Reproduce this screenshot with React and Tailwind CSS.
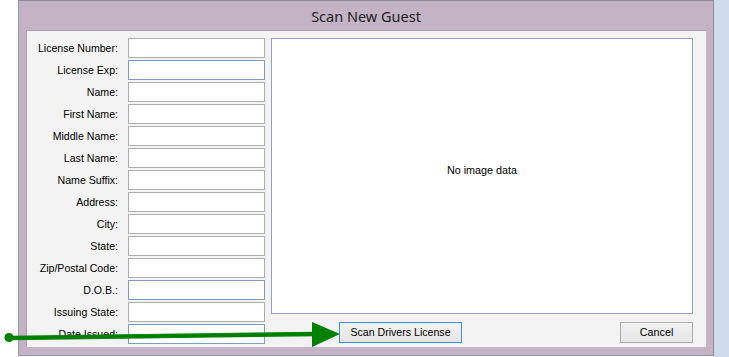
import React from "react";

const fields = [
  ["License Number:", false],
  ["License Exp:", true],
  ["Name:", false],
  ["First Name:", false],
  ["Middle Name:", false],
  ["Last Name:", false],
  ["Name Suffix:", false],
  ["Address:", false],
  ["City:", false],
  ["State:", false],
  ["Zip/Postal Code:", false],
  ["D.O.B.:", true],
  ["Issuing State:", false],
  ["Date Issued:", true],
];

export default function App() {
  return (
    <div className="relative flex w-[729px] h-[357px] bg-white overflow-hidden" style={{ fontFamily: '"Liberation Sans", Arial, sans-serif' }}>
      <div className="w-[18px] shrink-0 bg-white" />
      <div className="w-[696px] h-[356px] shrink-0 flex flex-col bg-[#c3b3c5] border border-[#8e8a9c] border-l-[#8a9ab2] border-b-[#8a9ab2]">
        <div className="h-[29px] flex items-center justify-center text-[15px] text-[#222]" style={{ fontFamily: '"Noto Sans", "Open Sans", sans-serif' }}>
          <span className="relative top-[1px] text-[14.5px]">Scan New Guest</span>
        </div>
        <div className="ml-[7px] mr-[7px] h-[317px] bg-[#f3f3f3] border-t border-l border-[#a99dab] flex pt-[7px]">
          <div className="w-[238px] shrink-0 flex flex-col">
            {fields.map(([label, blue]) => (
              <div key={label} className="flex items-center h-[20px] mb-[2px]">
                <div className="w-[91px] text-right text-[10.6px] text-black leading-none">{label}</div>
                <div className={"ml-[10px] w-[137px] h-[20px] bg-white border " + (blue ? "border-[#7f9cc6]" : "border-[#acacac]")} />
              </div>
            ))}
          </div>
          <div className="ml-[6px] flex flex-col">
            <div className="w-[422px] h-[276px] bg-white border border-[#8ea3c2] flex items-center justify-center text-[10.8px] text-black">
              <span className="relative top-[-6px]">No image data</span>
            </div>
            <div className="mt-[8px] flex justify-between w-[422px]">
              <div className="ml-[68px] w-[123px] h-[21px] border border-[#3c8fe8] bg-gradient-to-b from-[#f2f2f2] to-[#e6e6e6] flex items-center justify-center text-[10.6px] text-black">
                Scan Drivers License
              </div>
              <div className="w-[73px] h-[21px] border border-[#acacac] bg-gradient-to-b from-[#f2f2f2] to-[#e6e6e6] flex items-center justify-center text-[10.8px] text-black">
                Cancel
              </div>
            </div>
          </div>
        </div>
      </div>
      <div className="flex-1 bg-[#cfdcec]" />
      <svg className="absolute left-0 top-0 pointer-events-none" width="729" height="357" viewBox="0 0 729 357">
        <line x1="9" y1="338" x2="318" y2="334" stroke="#008000" strokeWidth="4.5" />
        <circle cx="9" cy="337.5" r="4.5" fill="#008000" />
        <polygon points="312,322 340,334 312,347" fill="#008000" />
      </svg>
    </div>
  );
}
